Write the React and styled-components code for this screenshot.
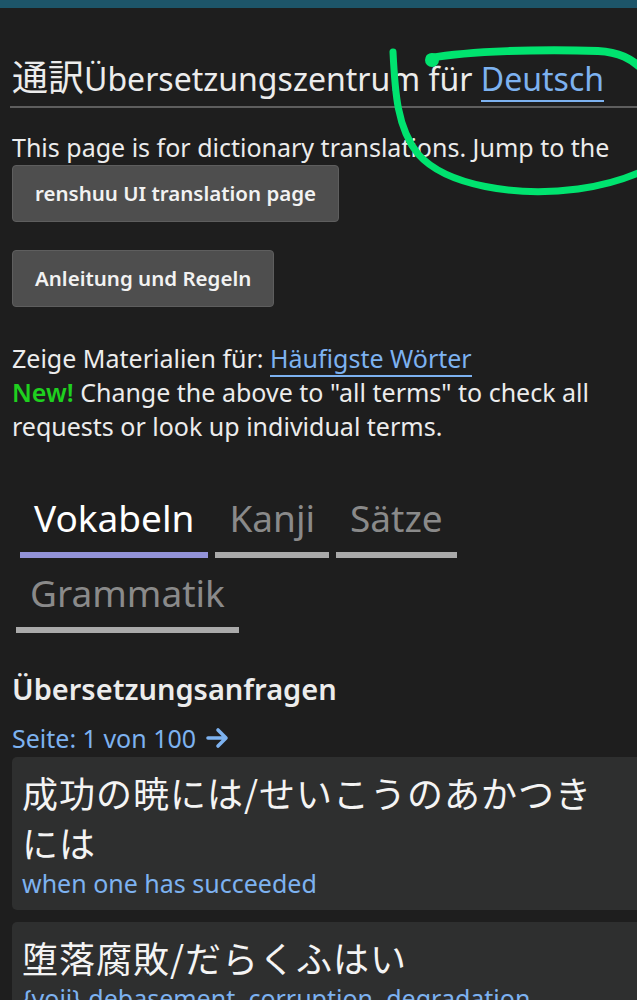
import React, {useState} from 'react'
import styled, {createGlobalStyle} from 'styled-components'

const GlobalStyle = createGlobalStyle`
html, body {
    margin: 0;
    padding: 0;
    background: #1e1e1e;
    overflow-x: hidden;
}
body {
    font-family: "Noto Sans", "Open Sans", "Noto Sans CJK JP", sans-serif;
    color: #ececec;
}
`

const requests = [
    {term: '成功の暁には/せいこうのあかつきには', meaning: 'when one has succeeded'},
    {term: '堕落腐敗/だらくふはい', meaning: '{yoji} debasement, corruption, degradation'},
]

const tabs = ['Vokabeln', 'Kanji', 'Sätze', 'Grammatik']

const App = () => {
    const [active, setActive] = useState('Vokabeln')

    return (
        <Page>
            <GlobalStyle/>
            <TopBar/>
            <Main>
                <Title>
                    <Jp>通訳</Jp>Übersetzungszentrum für <Link>Deutsch</Link>
                </Title>
                <Intro>This page is for dictionary translations. Jump to the</Intro>
                <Button>renshuu UI translation page</Button>
                <Button>Anleitung und Regeln</Button>

                <Info>
                    Zeige Materialien für: <Link>Häufigste Wörter</Link><br/>
                    <New>New!</New> Change the above to "all terms" to check all requests or look up individual terms.
                </Info>

                <Tabs>
                    {tabs.map(t => (
                        <Tab key={t} active={t === active} onClick={() => setActive(t)}>{t}</Tab>
                    ))}
                </Tabs>

                <SubTitle>Übersetzungsanfragen</SubTitle>
                <Pager>
                    Seite: 1 von 100
                    <svg width="26" height="24" viewBox="0 0 26 24">
                        <path d="M3 12h17M13 4l8 8-8 8" stroke="#7db2f0" strokeWidth="3.6" fill="none" strokeLinecap="round" strokeLinejoin="round"/>
                    </svg>
                </Pager>

                {requests.map(r => (
                    <Card key={r.term}>
                        <Term>{r.term}</Term>
                        <Meaning>{r.meaning}</Meaning>
                    </Card>
                ))}
            </Main>

            <Scribble width="637" height="220" viewBox="0 0 637 220">
                <path d="M393 52 C395 92 397 128 418 154 C446 186 516 197 578 189 C608 185 628 178 645 170"
                      stroke="#00e36f" strokeWidth="7" fill="none" strokeLinecap="round"/>
                <path d="M430 58 C470 51 540 49 598 51 C618 52 632 58 645 72"
                      stroke="#00e36f" strokeWidth="8" fill="none" strokeLinecap="round"/>
                <circle cx="432" cy="60" r="7" fill="#00e36f"/>
            </Scribble>
        </Page>
    )
}

export default App

const Page = styled.div`
position: relative;
min-height: 1000px;
overflow: hidden;
`

const TopBar = styled.div`
height: 8px;
background: #1d5569;
`

const Main = styled.div`
padding: 0 0 0 12px;
`

const Title = styled.h1`
margin: 45px 0 0 -2px;
padding: 0 0 5px 2px;
font-size: 32px;
font-weight: 400;
line-height: 44px;
border-bottom: 2px solid #5e5e5e;
white-space: nowrap;
`

const Jp = styled.span`
font-family: "Noto Sans CJK JP", sans-serif;
font-size: 36px;
`

const Link = styled.span`
color: #7db2f0;
border-bottom: 2.5px solid #7db2f0;
`

const Intro = styled.p`
margin: 23px 0 0;
font-size: 25px;
line-height: 32px;
white-space: nowrap;
`

const Button = styled.div`
display: block;
width: fit-content;
margin: 2px 0 28px;
padding: 0 22px;
height: 55px;
line-height: 55px;
background: #4e4e4e;
border: 1px solid #5e5e5e;
border-radius: 4px;
font-size: 20.5px;
font-weight: 600;
color: #f2f2f2;
`

const Info = styled.p`
margin: 34px 0 0;
padding-right: 20px;
font-size: 25px;
line-height: 34px;
`

const New = styled.span`
color: #1fd01f;
font-weight: 600;
`

const Tabs = styled.div`
display: flex;
flex-wrap: wrap;
gap: 11px 7px;
margin: 51px 0 0 8px;
`

const Tab = styled.div`
padding: 0 14px 10px;
font-size: 37px;
line-height: 48px;
color: ${p => p.active ? '#ffffff' : '#8a8a8a'};
border-bottom: 6px solid ${p => p.active ? '#9393d8' : '#aaaaaa'};
cursor: pointer;
&:last-child {
    margin-left: -4px;
}
`

const SubTitle = styled.h2`
margin: 36px 0 0;
font-size: 29px;
font-weight: 600;
line-height: 40px;
`

const Pager = styled.div`
display: flex;
align-items: center;
gap: 9px;
margin-top: 13px;
font-size: 25px;
line-height: 32px;
color: #7db2f0;
`

const Card = styled.div`
margin: 3px 0 12px;
padding: 10px 30px 11px 10px;
background: #2e2f2f;
border-radius: 5px 0 0 5px;
`

const Term = styled.div`
font-family: "Noto Sans CJK JP", sans-serif;
font-size: 36px;
line-height: 50px;
letter-spacing: 1px;
color: #f4f4f4;
`

const Meaning = styled.div`
font-size: 25px;
line-height: 32px;
color: #7db2f0;
`

const Scribble = styled.svg`
position: absolute;
top: 0;
left: 0;
pointer-events: none;
`
